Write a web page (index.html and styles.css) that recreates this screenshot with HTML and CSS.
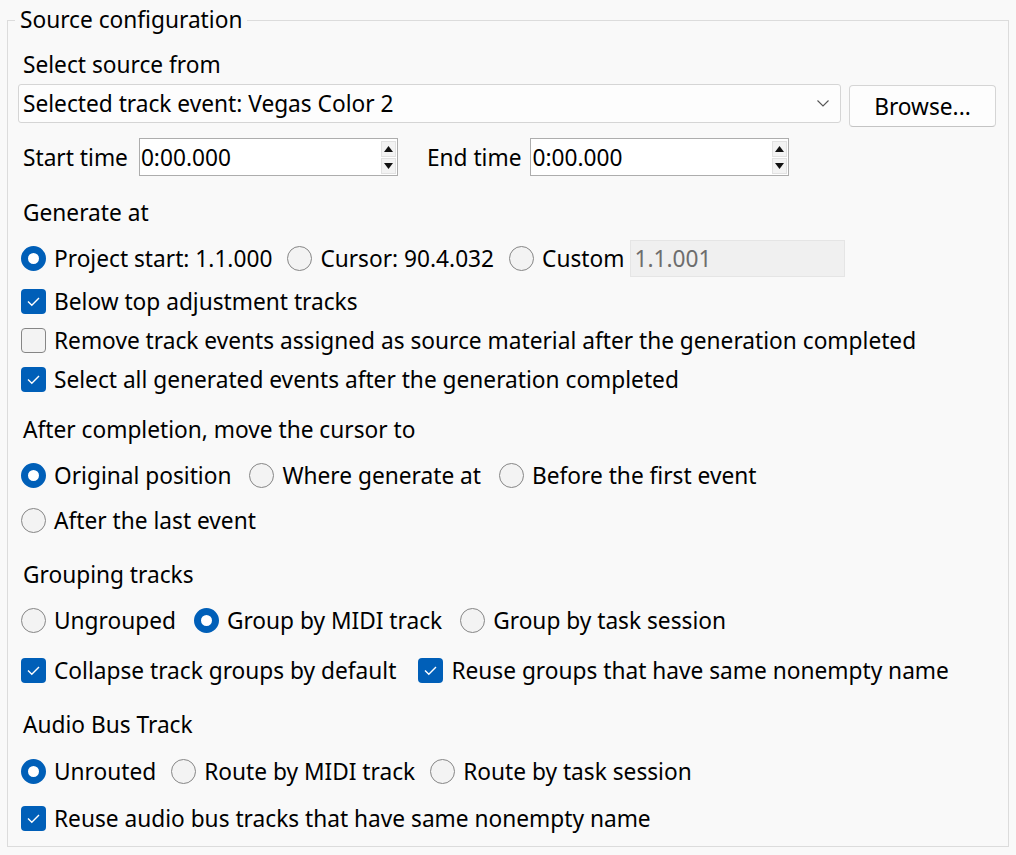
FILE: index.html
```html
<!DOCTYPE html>
<html lang="en">
<head>
    <meta charset="UTF-8">
    <title>Source configuration</title>
    <link rel="stylesheet" href="styles.css">
</head>
<body>
    <fieldset class="group">
        <legend class="group-title">Source configuration</legend>

        <div class="section source">
            <div class="row label">Select source from</div>
            <div class="row combo-row">
                <div class="combo">
                    <span class="combo-text">Selected track event: Vegas Color 2</span>
                    <svg class="chevron" width="12" height="7" viewBox="0 0 12 7">
                        <path d="M0.5 0.5 L6 6 L11.5 0.5" fill="none" stroke="#555" stroke-width="1.1"/>
                    </svg>
                </div>
                <button class="btn">Browse...</button>
            </div>
            <div class="row time-row">
                <span class="time-label">Start time</span>
                <div class="spin">
                    <span class="spin-text">0:00.000</span>
                    <div class="spin-btns">
                        <span class="spin-btn"><svg width="9" height="6" viewBox="0 0 9 6"><path d="M0 6 L4.5 0 L9 6 Z" fill="#111"/></svg></span>
                        <span class="spin-btn"><svg width="9" height="6" viewBox="0 0 9 6"><path d="M0 0 L4.5 6 L9 0 Z" fill="#111"/></svg></span>
                    </div>
                </div>
                <span class="time-label end">End time</span>
                <div class="spin">
                    <span class="spin-text">0:00.000</span>
                    <div class="spin-btns">
                        <span class="spin-btn"><svg width="9" height="6" viewBox="0 0 9 6"><path d="M0 6 L4.5 0 L9 6 Z" fill="#111"/></svg></span>
                        <span class="spin-btn"><svg width="9" height="6" viewBox="0 0 9 6"><path d="M0 0 L4.5 6 L9 0 Z" fill="#111"/></svg></span>
                    </div>
                </div>
            </div>
        </div>

        <div class="section generate">
            <div class="row label">Generate at</div>
            <div class="row options first">
                <label class="opt"><span class="radio on"></span>Project start: 1.1.000</label>
                <label class="opt"><span class="radio"></span>Cursor: 90.4.032</label>
                <label class="opt"><span class="radio"></span>Custom</label>
                <div class="textbox disabled">1.1.001</div>
            </div>
            <div class="checks">
                <div class="row options tight">
                    <label class="opt"><span class="check on"><svg width="25" height="25" viewBox="0 0 25 25"><path d="M7 12.5 L10.8 16.3 L18 9" fill="none" stroke="#fff" stroke-width="1.4"/></svg></span>Below top adjustment tracks</label>
                </div>
                <div class="row options tight">
                    <label class="opt"><span class="check"></span>Remove track events assigned as source material after the generation completed</label>
                </div>
                <div class="row options tight">
                    <label class="opt"><span class="check on"><svg width="25" height="25" viewBox="0 0 25 25"><path d="M7 12.5 L10.8 16.3 L18 9" fill="none" stroke="#fff" stroke-width="1.4"/></svg></span>Select all generated events after the generation completed</label>
                </div>
            </div>
        </div>

        <div class="section cursor">
            <div class="row label">After completion, move the cursor to</div>
            <div class="row options first">
                <label class="opt"><span class="radio on"></span>Original position</label>
                <label class="opt"><span class="radio"></span>Where generate at</label>
                <label class="opt"><span class="radio"></span>Before the first event</label>
            </div>
            <div class="row options next">
                <label class="opt"><span class="radio"></span>After the last event</label>
            </div>
        </div>

        <div class="section grouping">
            <div class="row label">Grouping tracks</div>
            <div class="row options first">
                <label class="opt"><span class="radio"></span>Ungrouped</label>
                <label class="opt"><span class="radio on"></span>Group by MIDI track</label>
                <label class="opt"><span class="radio"></span>Group by task session</label>
            </div>
            <div class="row options wide">
                <label class="opt"><span class="check on"><svg width="25" height="25" viewBox="0 0 25 25"><path d="M7 12.5 L10.8 16.3 L18 9" fill="none" stroke="#fff" stroke-width="1.4"/></svg></span>Collapse track groups by default</label>
                <label class="opt"><span class="check on"><svg width="25" height="25" viewBox="0 0 25 25"><path d="M7 12.5 L10.8 16.3 L18 9" fill="none" stroke="#fff" stroke-width="1.4"/></svg></span>Reuse groups that have same nonempty name</label>
            </div>
        </div>

        <div class="section bus">
            <div class="row label">Audio Bus Track</div>
            <div class="row options first">
                <label class="opt"><span class="radio on"></span>Unrouted</label>
                <label class="opt"><span class="radio"></span>Route by MIDI track</label>
                <label class="opt"><span class="radio"></span>Route by task session</label>
            </div>
            <div class="row options next">
                <label class="opt"><span class="check on"><svg width="25" height="25" viewBox="0 0 25 25"><path d="M7 12.5 L10.8 16.3 L18 9" fill="none" stroke="#fff" stroke-width="1.4"/></svg></span>Reuse audio bus tracks that have same nonempty name</label>
            </div>
        </div>
    </fieldset>
</body>
</html>
```

FILE: styles.css
```css
body {
    margin: 0;
    background-color: #f9f9f9;
    color: #000;
    font-family: "Noto Sans", "Open Sans", sans-serif;
    font-size: 22.7px;
}
.group {
    margin: 6px 7px 0 7px;
    width: 1002px;
    height: 841px;
    box-sizing: border-box;
    padding: 10px 10px 0 10px;
    border: 1px solid #dcdcdc;
    min-width: 0;
}
.group-title {
    margin-left: -3px;
    padding: 0 5px;
    line-height: 28px;
}
.row {
    display: flex;
    align-items: center;
    height: 40px;
}
.label {
    padding-left: 5px;
}
.combo-row {
    height: 44px;
    align-items: flex-start;
    gap: 8px;
}
.combo {
    display: flex;
    align-items: center;
    justify-content: space-between;
    width: 823px;
    height: 39px;
    box-sizing: border-box;
    padding: 0 11px 0 4px;
    background-color: #fdfdfd;
    border: 1px solid #d5d5d5;
    border-radius: 3px;
}
.btn {
    margin-top: 1px;
    width: 147px;
    height: 42px;
    font-family: inherit;
    font-size: 22.7px;
    color: #000;
    background-color: #fdfdfd;
    border: 1px solid #d5d5d5;
    border-bottom-color: #c4c4c4;
    border-radius: 4px;
}
.time-row {
    margin-top: 10px;
    height: 38px;
}
.time-label {
    padding-left: 5px;
    margin-right: 11px;
}
.time-label.end {
    margin-left: 29px;
    padding-left: 0;
    margin-right: 9px;
}
.spin {
    display: flex;
    align-items: center;
    justify-content: space-between;
    width: 259px;
    height: 38px;
    box-sizing: border-box;
    padding: 0 1px 0 1px;
    background-color: #fff;
    border: 1px solid #adadad;
}
.spin-btns {
    display: flex;
    flex-direction: column;
    gap: 1px;
}
.spin-btn {
    display: flex;
    align-items: center;
    justify-content: center;
    width: 15px;
    height: 16px;
    background-color: #f3f3f3;
    border: 1px solid #e2e2e2;
    box-sizing: border-box;
}
.section {
    margin-top: 14px;
}
.section.source {
    margin-top: 0;
}
.generate {
    margin-top: 16px;
}
.cursor {
    margin-top: 10px;
}
.options {
    padding-left: 3px;
    gap: 18px;
}
.generate .options.first {
    gap: 15px;
}
.options.first {
    margin-top: 6px;
}
.options.next {
    margin-top: 5px;
}
.options.wide {
    margin-top: 10px;
    gap: 22px;
}
.checks {
    margin-top: 4px;
}
.options.tight {
    height: 39px;
}
.bus .options.first,
.bus .options.next {
    margin-top: 7px;
}
.bus .options.first {
    gap: 15px;
}
.opt {
    display: flex;
    align-items: center;
    gap: 8px;
    white-space: nowrap;
}
.radio {
    width: 25px;
    height: 25px;
    box-sizing: border-box;
    border-radius: 50%;
    border: 1px solid #868686;
    background-color: #f3f3f3;
}
.radio.on {
    border: 7.5px solid #005fb8;
    background-color: #fff;
}
.check {
    display: block;
    width: 25px;
    height: 25px;
    box-sizing: border-box;
    border-radius: 4px;
    border: 1px solid #868686;
    background-color: #f3f3f3;
}
.check.on {
    border: none;
    background-color: #005fb8;
}
.check svg {
    display: block;
}
.textbox {
    margin-left: -9px;
    width: 215px;
    height: 37px;
    box-sizing: border-box;
    display: flex;
    align-items: center;
    padding-left: 3px;
}
.textbox.disabled {
    color: #6d6d6d;
    background-color: #f0f0f0;
    border: 1px solid #e5e5e5;
}
```
